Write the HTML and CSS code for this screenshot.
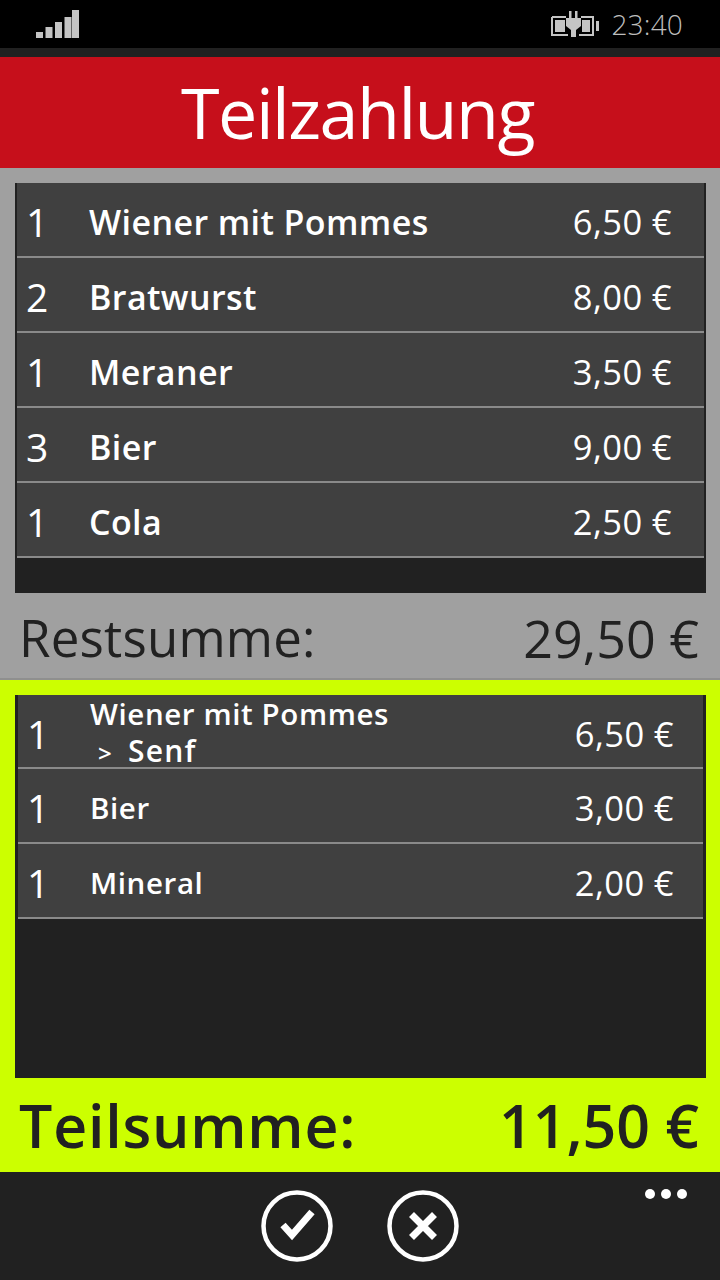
FILE: index.html
```html
<!DOCTYPE html>
<html lang="de">
<head>
<meta charset="utf-8">
<title>Teilzahlung</title>
<link rel="stylesheet" href="styles.css">
</head>
<body>
<div class="phone">
  <header class="status">
    <svg class="signal" width="44" height="30" viewBox="0 0 44 30">
      <rect x="0" y="23" width="7" height="6"/>
      <rect x="9.500" y="18" width="7" height="11"/>
      <rect x="19" y="13" width="7" height="16"/>
      <rect x="28.500" y="8" width="7" height="21"/>
      <rect x="36" y="1" width="7" height="28"/>
    </svg>
    <div class="status-right">
      <svg class="battery" width="49" height="28" viewBox="0 0 49 28">
        <path class="batt-line" d="M1 7H15M1 7V25H17M30 7H42V25H28"/>
        <path class="batt-fill" d="M4 10H14V22H4ZM31 10H39V22H31ZM45 11H48V21H45Z"/>
        <path class="batt-fill" d="M18 1H20.500V8H24V1H26.500V8H30V16L25 20V27H20V20L15 16V8H18Z"/>
      </svg>
      <span class="clock">23:40</span>
    </div>
  </header>
  <div class="gap"></div>
  <h1 class="title">Teilzahlung</h1>

  <section class="part part-rest">
    <div class="list list-rest">
      <div class="row"><span class="qty">1</span><span class="name">Wiener mit Pommes</span><span class="price">6,50 €</span></div>
      <div class="row"><span class="qty">2</span><span class="name">Bratwurst</span><span class="price">8,00 €</span></div>
      <div class="row"><span class="qty">1</span><span class="name">Meraner</span><span class="price">3,50 €</span></div>
      <div class="row"><span class="qty">3</span><span class="name">Bier</span><span class="price">9,00 €</span></div>
      <div class="row"><span class="qty">1</span><span class="name">Cola</span><span class="price">2,50 €</span></div>
    </div>
    <div class="total total-rest"><span class="label">Restsumme:</span><span>29,50 €</span></div>
  </section>

  <section class="part part-sub">
    <div class="list list-sub">
      <div class="row row-first">
        <span class="qty">1</span>
        <span class="name name-small name-stack"><span>Wiener mit Pommes</span><span class="extra"><span class="chev">&gt;</span><span class="senf">Senf</span></span></span>
        <span class="price">6,50 €</span>
      </div>
      <div class="row"><span class="qty">1</span><span class="name name-small">Bier</span><span class="price">3,00 €</span></div>
      <div class="row"><span class="qty">1</span><span class="name name-small">Mineral</span><span class="price">2,00 €</span></div>
    </div>
    <div class="total total-sub"><span class="label">Teilsumme:</span><span>11,50 €</span></div>
  </section>

  <footer class="appbar">
    <button class="round" type="button" aria-label="OK">
      <svg width="72" height="72" viewBox="0 0 72 72"><circle class="ring" cx="36" cy="36" r="33.500"/><path class="glyph" d="M22 35L31 45L51 22"/></svg>
    </button>
    <button class="round" type="button" aria-label="Abbrechen">
      <svg width="72" height="72" viewBox="0 0 72 72"><circle class="ring" cx="36" cy="36" r="33.500"/><path class="glyph" d="M24.500 24.500L47.500 47.500M47.500 24.500L24.500 47.500"/></svg>
    </button>
    <div class="more"><i></i><i></i><i></i></div>
  </footer>
</div>
</body>
</html>
```

FILE: styles.css
```css
* { box-sizing: border-box; }

html, body { margin: 0; padding: 0; }

body {
  width: 720px;
  height: 1280px;
  overflow: hidden;
  background: #212121;
  font-family: "Open Sans", "Noto Sans", sans-serif;
}

.phone { display: flex; flex-direction: column; height: 1280px; }

/* system tray */
.status {
  height: 48px;
  background: #000;
  display: flex;
  align-items: center;
  justify-content: space-between;
  padding: 0 37px 0 36px;
}
.signal { fill: #c4c4c4; }
.status-right { display: flex; align-items: center; gap: 11px; }
.batt-line { fill: none; stroke: #c4c4c4; stroke-width: 2; }
.batt-fill { fill: #c4c4c4; }
.clock { color: #bdbdbd; font-size: 28px; font-weight: 300; letter-spacing: 0.200px; line-height: 50px; }

.gap { height: 9px; background: #212121; }

.title {
  margin: 0;
  height: 111px;
  padding-right: 5px;
  background: #c60f1b;
  color: #fff;
  font-size: 70px;
  font-weight: 400;
  line-height: 110px;
  text-align: center;
  letter-spacing: -1.500px;
}

/* the two order panels */
.part { display: flex; flex-direction: column; padding: 15px 14px 0 15px; }
.part-rest { height: 512px; background: #a0a0a0; border-bottom: 2px solid #8f8f8f; }
.part-sub { height: 492px; background: #ccff00; }

.list { background: #212121; border-left: 2px solid #212121; border-right: 2px solid #212121; }
.list-rest { height: 410px; }
.list-sub { height: 383px; padding-left: 1px; padding-right: 1px; }

.row {
  height: 75px;
  display: flex;
  align-items: center;
  background: #404040;
  border-bottom: 2px solid #8a8a8a;
  color: #fff;
  padding: 4px 32px 0 0;
}
.list-sub .row { padding-right: 29px; }
.row-first { height: 74px; }

.qty { width: 72px; padding-left: 9px; font-size: 39px; font-weight: 400; }
.name { flex: 1; font-size: 34px; font-weight: 600; letter-spacing: 0.400px; }
.name-small { font-size: 29.500px; letter-spacing: 0.600px; }
.name-stack { display: flex; flex-direction: column; line-height: 37px; margin-top: 0; }
.extra { display: flex; align-items: baseline; }
.chev { width: 38px; padding-left: 8px; font-size: 24px; }
.senf { font-size: 30px; letter-spacing: 1.200px; }
.price { font-size: 34.500px; font-weight: 400; letter-spacing: 0.400px; }

.total {
  flex: 1;
  display: flex;
  align-items: center;
  justify-content: space-between;
  color: #212121;
  padding: 3px 7px 0 4px;
}
.total-rest { font-size: 52px; font-weight: 400; }
.total-rest .label { font-size: 51px; letter-spacing: 0.200px; }
.total-sub { font-size: 59px; font-weight: 600; padding-top: 0; }
.total-sub .label { letter-spacing: 0.800px; }

/* application bar */
.appbar {
  flex: 1;
  display: flex;
  align-items: flex-start;
  justify-content: center;
  gap: 54px;
  padding-top: 18px;
  position: relative;
  background: #212121;
}
.round { padding: 0; border: 0; background: none; display: block; width: 72px; height: 72px; }
.ring { fill: none; stroke: #fff; stroke-width: 4.500; }
.glyph { fill: none; stroke: #fff; stroke-width: 7; }
.more { position: absolute; top: 17px; left: 645px; display: flex; gap: 6px; }
.more i { display: block; width: 10px; height: 10px; border-radius: 50%; background: #fff; }
```
